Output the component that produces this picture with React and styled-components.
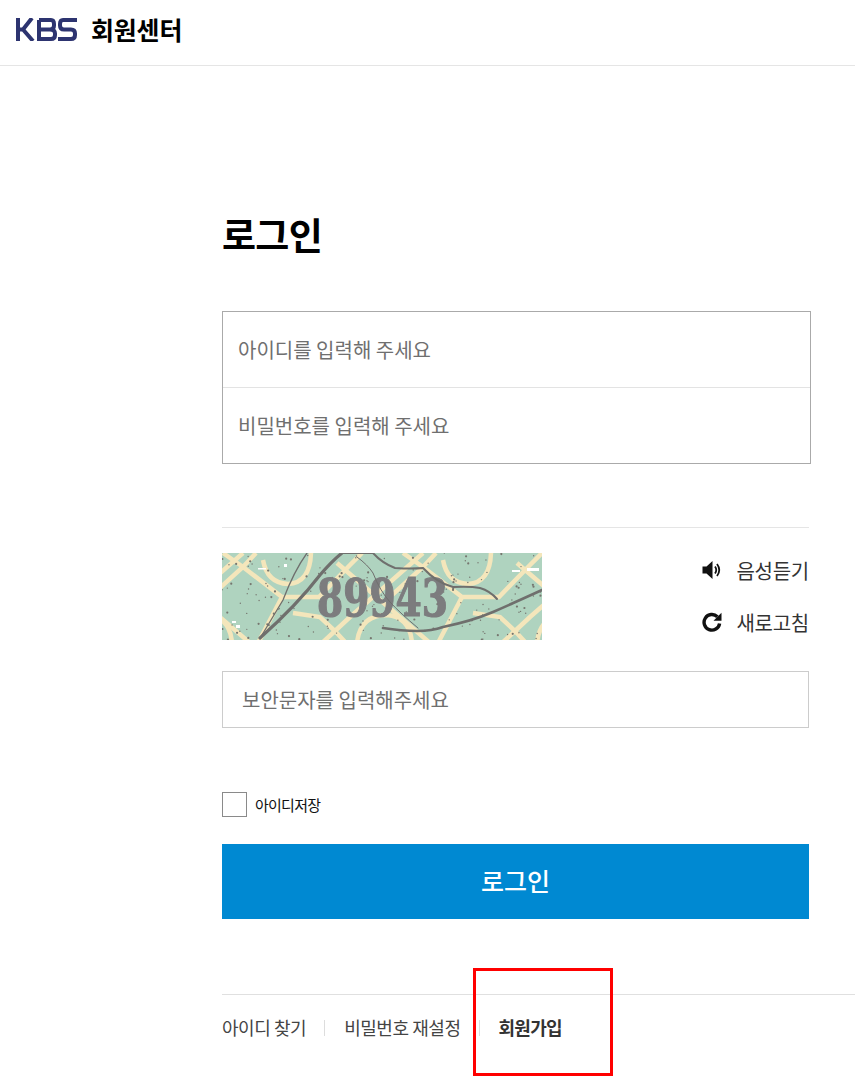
import React from "react";
import styled, { createGlobalStyle } from "styled-components";

const FONT = `"Noto Sans CJK KR", "Noto Sans", sans-serif`;

// small hash so the dust specks look scattered but stay the same on every render
const noise = (n) => {
  const v = Math.sin(n * 12.9898) * 43758.5453;
  return v - Math.floor(v);
};

const specks = Array.from({ length: 190 }, (_, i) => ({
  x: noise(i + 1) * 320,
  y: noise(i + 500) * 87,
  r: i % 3 === 0 ? 1.1 : 0.7,
}));

const flecks = [
  [36, 15, 8, 1.5],
  [62, 11, 3, 3],
  [290, 17, 8, 2],
  [305, 15, 12, 3],
  [10, 68, 4, 2],
  [14, 72, 4, 3],
];

// the lattice repeats every 180px
const tileOffsets = [-180, 0, 180, 360];

function Captcha() {
  return (
    <CaptchaImage viewBox="0 0 320 87" role="img" aria-label="보안문자">
      <rect width="320" height="87" fill="#afd3bf" />
      <g stroke="#f4e6bb" strokeWidth="4.5" fill="none">
        {tileOffsets.map((dx) => (
          <g key={dx} transform={`translate(${dx} 0)`}>
            <path d="M1 0 L21 14 L60 44 H97 L128 12 L140 0" />
            <path d="M34 0 L21 14 L-10 42" />
            <path d="M60 44 L36 90" />
            <path d="M41 7 Q45 30 66 31 Q88 30 89 0" />
            <path d="M71 60 L98 64 L113 78 L124 90" />
            <path d="M113 78 L128 64 L167 30 L201 0" />
            <path d="M115 10 L150 40 L208 90" />
            <path d="M135 90 Q138 62 165 62 Q188 64 190 90" />
            <path d="M113 78 L100 90" />
          </g>
        ))}
      </g>
      <g fill="#76766f">
        {specks.map((s, i) => (
          <circle key={i} cx={s.x} cy={s.y} r={s.r} />
        ))}
      </g>
      <g fill="#fff">
        {flecks.map(([x, y, w, h]) => (
          <rect key={x + y} x={x} y={y} width={w} height={h} />
        ))}
      </g>
      <CaptchaDigits x="95" y="63" textLength="131" lengthAdjust="spacingAndGlyphs">
        89943
      </CaptchaDigits>
      <g stroke="#6f6f6d" fill="none" strokeLinecap="round">
        <path d="M38 85 Q75 52 98 22 Q110 8 120 0" strokeWidth="3.2" />
        <path d="M40 82 Q52 62 61 47 Q72 18 85 0" strokeWidth="1.3" />
        <path d="M135 4 Q146 12 151 20 Q158 38 168 49 Q178 60 196 75" strokeWidth="1" />
        <path d="M120 0 H151 Q160 10 173 15 Q190 16 201 15 Q215 30 231 34 Q248 33 258 35 Q268 38 275 46" strokeWidth="2" />
        <path d="M161 75 Q180 78 195 78 Q210 78 221 74 Q250 68 271 59 Q296 48 320 37" strokeWidth="2.6" />
      </g>
    </CaptchaImage>
  );
}

function KbsLogo() {
  return (
    <LogoMark viewBox="0 0 62 23" aria-label="KBS">
      <g fill="none" stroke="#2d3470" strokeWidth="4">
        <path d="M3 0V23M3 11.5H8L17 0M8 11.5L18 23" />
        <path d="M24 2H36Q39 2 39 6V7.5Q39 11.5 35 11.5H26M35 11.5Q40 11.5 40 15.5V17Q40 21 36 21H24V2" />
        <path d="M62 2H48Q45 2 45 6V7.5Q45 11.5 49 11.5H56Q60 11.5 60 15.5V17Q60 21 56 21H43" />
      </g>
    </LogoMark>
  );
}

function SpeakerIcon() {
  return (
    <LinkIcon viewBox="0 0 20 20">
      <path d="M0.5 6.5H4.5L10.5 1V19L4.5 13.5H0.5Z" fill="#111" />
      <path d="M13 6.5Q15.5 10 13 13.5M15 4Q19.5 10 15 16" stroke="#111" strokeWidth="1.8" fill="none" />
    </LinkIcon>
  );
}

function RefreshIcon() {
  return (
    <LinkIcon viewBox="0 0 20 20">
      <path d="M15.4 4.8A7.8 7.8 0 1 0 17.6 11.5" stroke="#111" strokeWidth="3.4" fill="none" />
      <path d="M19.5 0.8V8.8H11.5Z" fill="#111" />
    </LinkIcon>
  );
}

export default function App() {
  return (
    <Page>
      <GlobalStyle />
      <Header>
        <KbsLogo />
        <HeaderTitle>회원센터</HeaderTitle>
      </Header>
      <Main>
        <Title>로그인</Title>
        <LoginBox>
          <BoxRow>아이디를 입력해 주세요</BoxRow>
          <BoxRow $divided>비밀번호를 입력해 주세요</BoxRow>
        </LoginBox>
        <Divider />
        <CaptchaRow>
          <Captcha />
          <CaptchaLinks>
            <CaptchaLink>
              <SpeakerIcon />
              음성듣기
            </CaptchaLink>
            <CaptchaLink>
              <RefreshIcon />
              새로고침
            </CaptchaLink>
          </CaptchaLinks>
        </CaptchaRow>
        <CaptchaInput>보안문자를 입력해주세요</CaptchaInput>
        <SaveRow>
          <CheckBox />
          <SaveLabel>아이디 저장</SaveLabel>
        </SaveRow>
        <LoginButton>로그인</LoginButton>
      </Main>
      <FooterNav>
        <FooterLink>아이디 찾기</FooterLink>
        <FooterLink $separated>비밀번호 재설정</FooterLink>
        <FooterLink $separated $strong>
          회원가입
        </FooterLink>
        <Highlight />
      </FooterNav>
    </Page>
  );
}

const GlobalStyle = createGlobalStyle`
  html, body {
    margin: 0;
    padding: 0;
    background: #fff;
  }
  body {
    font-family: ${FONT};
  }
`;

const Page = styled.div`
  width: 855px;
  height: 1087px;
  overflow: hidden;
  background: #fff;
`;

const Header = styled.header`
  height: 58px;
  padding: 0 0 7px 15px;
  border-bottom: 1px solid #e5e5e5;
  display: flex;
  align-items: center;
  gap: 14px;
`;

const LogoMark = styled.svg`
  width: 62px;
  height: 23px;
`;

const HeaderTitle = styled.h1`
  margin: 0;
  font-size: 25px;
  font-weight: 700;
  color: #000;
  letter-spacing: -0.2px;
`;

const Main = styled.main`
  width: 587px;
  margin-left: 222px;
  padding-top: 143px;
`;

const Title = styled.h2`
  margin: 0;
  height: 59px;
  line-height: 51px;
  font-size: 37px;
  font-weight: 700;
  color: #000;
  letter-spacing: -0.7px;
`;

const LoginBox = styled.div`
  width: 589px;
  box-sizing: border-box;
  margin-top: 43px;
  border: 1px solid #aaa;
`;

const BoxRow = styled.div`
  height: 75px;
  padding-left: 15px;
  display: flex;
  align-items: center;
  font-size: 20px;
  color: #6f6f6f;
  border-top: ${(p) => (p.$divided ? "1px solid #e3e3e3" : "none")};
`;

const Divider = styled.hr`
  margin: 63px 0 0;
  border: 0;
  border-top: 1px solid #e5e5e5;
`;

const CaptchaRow = styled.div`
  margin-top: 25px;
  display: flex;
  justify-content: space-between;
  align-items: flex-start;
`;

const CaptchaImage = styled.svg`
  width: 320px;
  height: 87px;
  display: block;
  filter: blur(0.4px);
`;

const CaptchaDigits = styled.text`
  font-family: "DejaVu Serif", "Liberation Serif", serif;
  font-size: 52px;
  font-weight: 700;
  fill: #7c7c7e;
  stroke: #7c7c7e;
  stroke-width: 1.2px;
`;

const CaptchaLinks = styled.div`
  display: flex;
  flex-direction: column;
  gap: 22px;
  padding-top: 2px;
`;

const CaptchaLink = styled.div`
  height: 30px;
  display: flex;
  align-items: center;
  gap: 14px;
  font-size: 20px;
  letter-spacing: -0.25px;
  color: #333;
`;

const LinkIcon = styled.svg`
  width: 20px;
  height: 20px;
`;

const CaptchaInput = styled.div`
  margin-top: 31px;
  height: 57px;
  box-sizing: border-box;
  border: 1px solid #ccc;
  padding-left: 19px;
  display: flex;
  align-items: center;
  font-size: 20px;
  color: #6f6f6f;
`;

const SaveRow = styled.div`
  margin-top: 64px;
  height: 25px;
  display: flex;
  align-items: center;
  gap: 8px;
`;

const CheckBox = styled.span`
  width: 25px;
  height: 25px;
  box-sizing: border-box;
  border: 1px solid #8a8a8a;
`;

const SaveLabel = styled.span`
  font-size: 15px;
  color: #111;
  letter-spacing: -0.8px;
  word-spacing: -2.2px;
`;

const LoginButton = styled.button`
  display: block;
  width: 100%;
  height: 75px;
  margin-top: 27px;
  padding: 0 0 4px;
  border: 0;
  background: #0089d2;
  color: #fff;
  font-family: ${FONT};
  font-size: 25px;
  font-weight: 500;
`;

const FooterNav = styled.nav`
  position: relative;
  margin: 75px 0 0 222px;
  height: 64px;
  border-top: 1px solid #e0e0e0;
  display: flex;
  align-items: center;
`;

const FooterLink = styled.span`
  position: relative;
  font-size: 18px;
  font-weight: ${(p) => (p.$strong ? 700 : 400)};
  color: ${(p) => (p.$strong ? "#333" : "#444")};
  margin-left: ${(p) => (p.$separated ? "38px" : "0")};
  letter-spacing: ${(p) => (p.$strong ? "-0.7px" : "-0.45px")};

  &::before {
    content: ${(p) => (p.$separated ? '""' : "none")};
    position: absolute;
    left: -20px;
    top: 6px;
    width: 1px;
    height: 16px;
    background: #ddd;
  }
`;

const Highlight = styled.div`
  position: absolute;
  left: 251px;
  top: -27px;
  width: 140px;
  height: 108px;
  box-sizing: border-box;
  border: 3px solid #f00;
`;
